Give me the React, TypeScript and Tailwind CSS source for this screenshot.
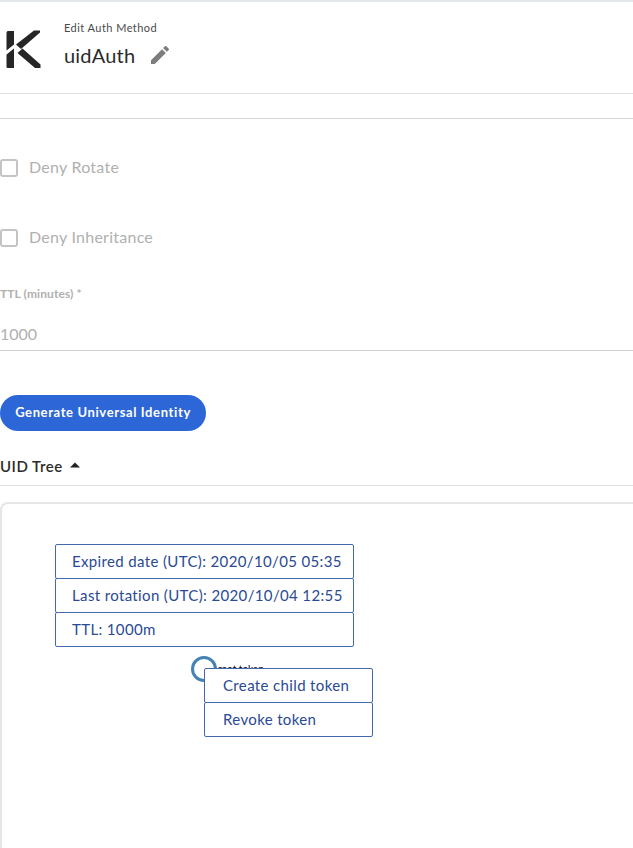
import React from 'react';

const Checkbox = ({ label }: { label: string }) => (
    <div className="flex items-center h-[20px]">
        <span className="w-[18px] h-[18px] rounded-[3px] border-2 border-[#c4c4c4] bg-white" />
        <span className="ml-[11px] -mt-[2px] text-[16px] tracking-[0.25px] text-[#b0b0b0]">{label}</span>
    </div>
);

const MenuItem = ({ text, pad }: { text: string; pad: string }) => (
    <div className={`h-[35px] -mb-px flex items-center ${pad} bg-white border border-[#4468ad] rounded-[2px] text-[15px] tracking-[0.36px] text-[#2a4a94] whitespace-nowrap`}>
        {text}
    </div>
);

export default function App() {
    return (
        <div className="w-[633px] h-[848px] overflow-hidden bg-white font-['Lato','Noto_Sans',sans-serif]">
            <div className="h-[2px] bg-[#e3e6e8]" />

            {/* Header */}
            <div className="h-[92px] border-b border-[#e2e2e2] flex items-start">
                <svg className="ml-[6px] mt-[27px] shrink-0" width="35" height="41" viewBox="0 0 35 41">
                    <path d="M1.500 2h6.500v13.500l-7.500 6v-18zM0.500 25.500l7.500-6v19.500h-6.500a1 1 0 0 1-1-1z" fill="#262626" />
                    <path d="M10 15.500 L28 1.500 h6 v2 L15 20z" fill="#262626" />
                    <path d="M11.500 24 L16.500 19.500 L34.500 35.500 V39 H29z" fill="#262626" />
                </svg>
                <div className="ml-[23px] mt-[19px]">
                    <p className="text-[11px] leading-[14px] tracking-[0.45px] text-[#4a4a4a]">Edit Auth Method</p>
                    <div className="flex items-center mt-[5px]">
                        <span className="text-[20px] leading-[30px] text-[#2b2b2b] tracking-[0.2px]">uidAuth</span>
                        <svg className="ml-[13px]" width="24" height="24" viewBox="0 0 24 24" fill="#7d7d7d">
                            <path d="M3 17.250V21h3.750L17.810 9.940l-3.750-3.750L3 17.250zM20.710 7.040a1 1 0 0 0 0-1.410l-2.340-2.340a1 1 0 0 0-1.410 0l-1.830 1.830 3.750 3.750 1.830-1.830z" />
                        </svg>
                    </div>
                </div>
            </div>

            <div className="h-[25px] border-b border-[#d4d4d4]" />

            {/* Form */}
            <div className="pt-[39px]">
                <Checkbox label="Deny Rotate" />
                <div className="mt-[50px]">
                    <Checkbox label="Deny Inheritance" />
                </div>
                <p className="mt-[39px] text-[12px] leading-[14px] font-bold tracking-[0.1px] text-[#b0b0b0]">TTL (minutes) *</p>
                <div className="mt-[23px] h-[27px] border-b border-[#d0d0d0] text-[16px] leading-[20px] text-[#b0b0b0]">1000</div>
                <button className="mt-[44px] block w-[206px] h-[36px] rounded-full bg-[#2d66d6] text-white text-[13px] font-bold tracking-[0.62px]">
                    Generate Universal Identity
                </button>
            </div>

            {/* UID Tree */}
            <div className="mt-[17px] h-[38px] border-b border-[#e2e2e2] flex items-start">
                <span className="text-[15px] leading-[36px] font-semibold text-[#2b2b2b] tracking-[0.5px]">UID Tree</span>
                <svg className="ml-[7px] mt-[14px]" width="10" height="6" viewBox="0 0 10 6" fill="#222">
                    <path d="M0 5.500 L5 0.500 L10 5.500z" />
                </svg>
            </div>

            <div className="relative mt-[16px] h-[400px] border-l-2 border-t-2 border-[#e6e6e6] rounded-tl-[8px]">
                <div className="absolute left-[53px] top-[40px] w-[299px]">
                    <MenuItem text="Expired date (UTC): 2020/10/05 05:35" pad="pl-[16px]" />
                    <MenuItem text="Last rotation (UTC): 2020/10/04 12:55" pad="pl-[16px]" />
                    <MenuItem text="TTL: 1000m" pad="pl-[16px]" />
                </div>
                <div className="absolute left-[189px] top-[152px] w-[26px] h-[26px] rounded-full border-[3px] border-[#4682b4] bg-white" />
                <span className="absolute left-[216px] top-[158px] text-[10px] leading-[12px] text-black">root token</span>
                <div className="absolute left-[202px] top-[164px] w-[169px]">
                    <MenuItem text="Create child token" pad="pl-[18px]" />
                    <MenuItem text="Revoke token" pad="pl-[18px]" />
                </div>
            </div>
        </div>
    );
}
